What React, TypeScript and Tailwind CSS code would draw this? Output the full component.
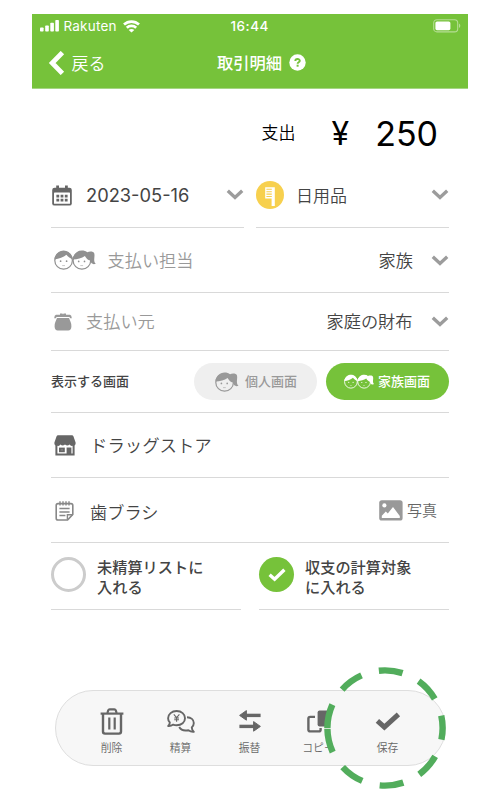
import React from 'react';
import { clsx } from 'clsx';

const jp = "font-['Noto_Sans_CJK_JP',sans-serif]";
const latin = "font-[Inter,'Noto_Sans_CJK_JP',sans-serif]";

const Chevron = () => (
  <svg width="18" height="11" viewBox="0 0 18 11" className="shrink-0">
    <path d="M1.8 1.8 L9 8.4 L16.2 1.8" fill="none" stroke="#9c9c9c" strokeWidth="3.4" />
  </svg>
);

interface FaceProps {
  x?: number;
}

const Boy = ({ x = 0 }: FaceProps) => (
  <g transform={`translate(${x} 0)`}>
    <circle cx="9.6" cy="10.4" r="8.8" fill="none" stroke="currentColor" strokeWidth="1.2" />
    <path d="M.4 9.4 C1 4.2 4.8 .6 9.6 .6 C14.4 .6 18.2 4.2 18.8 9.4 C16.4 8.6 14 7 12.4 4.8 C9.4 7.4 5.2 8.8 .4 9.4Z" fill="currentColor" />
    <circle cx="6.6" cy="11.2" r=".85" fill="currentColor" />
    <circle cx="12.6" cy="11.2" r=".85" fill="currentColor" />
    <path d="M8.2 15.6 H11" fill="none" stroke="currentColor" strokeWidth=".5" />
  </g>
);

const Girl = ({ x = 0 }: FaceProps) => (
  <g transform={`translate(${x} 0)`}>
    <circle cx="9.6" cy="10.4" r="8.8" fill="none" stroke="currentColor" strokeWidth="1.2" />
    <path d="M.4 9.6 C1 4.2 4.8 .6 9.6 .6 C11.8 .6 13.6 1.2 15 2.2 C17.2 1.2 21.4 1.2 22 3.6 C22.6 6 21.6 8.8 22 11 C22.2 12.4 22.8 13.2 23.6 13.6 C21.4 14.8 18.8 14.2 17.8 10.6 C15.6 9.8 13.8 8.4 12.6 6 C9.4 8.2 5.2 9.2 .4 9.6Z" fill="currentColor" />
    <circle cx="6.4" cy="11.4" r=".85" fill="currentColor" />
    <circle cx="12.2" cy="11.4" r=".85" fill="currentColor" />
    <path d="M8 15.6 H10.8" fill="none" stroke="currentColor" strokeWidth=".5" />
  </g>
);

const StatusBar = () => (
  <div className={clsx('flex h-[24px] items-center pl-[8px] pr-[7px] text-white', latin)}>
    <svg width="19" height="12" viewBox="0 0 19 12" className="shrink-0" fill="white">
      <rect x="0" y="7.4" width="3.6" height="4.2" rx=".8" />
      <rect x="5.2" y="5.4" width="3.6" height="6.2" rx=".8" />
      <rect x="10.3" y="2.8" width="3.6" height="8.8" rx=".8" />
      <rect x="15.3" y="0" width="3.6" height="11.6" rx=".8" />
    </svg>
    <span className="ml-[4.5px] mt-[2px] w-[53px] whitespace-nowrap text-[13.5px] leading-none tracking-[0.2px]">Rakuten</span>
    <svg width="17" height="13" viewBox="0 0 17 13" className="ml-[6px] shrink-0" fill="none" stroke="white" strokeWidth="2.7">
      <path d="M1 4.6 C5.2 .6 11.8 .6 16 4.6" />
      <path d="M3.8 7.8 C6.4 5.3 10.6 5.3 13.2 7.8" />
      <path d="M8.5 12.6 L5.7 10 C7.2 8.6 9.8 8.6 11.3 10Z" fill="white" stroke="none" />
    </svg>
    <span className="ml-[91px] mt-[2px] text-[13.5px] font-medium leading-none tracking-[0.5px]">16:44</span>
    <svg width="28" height="14" viewBox="0 0 28 14" className="ml-auto">
      <rect x=".7" y=".7" width="24" height="12.2" rx="3.2" fill="none" stroke="#b5dd94" strokeWidth="1.1" />
      <rect x="2.4" y="2.4" width="15" height="8.8" rx="1.6" fill="white" />
      <path d="M26 4.6 C27.8 5.4 27.8 8.2 26 9Z" fill="#b5dd94" />
    </svg>
  </div>
);

const Header = () => (
  <header className={clsx('h-[75px] border-b border-[#a5d682] bg-[#76c23a]', jp)}>
    <StatusBar />
    <div className="grid h-[50px] grid-cols-[185px_1fr] items-center text-white">
      <button className="flex items-center pl-[16px]">
        <svg width="17" height="24" viewBox="0 0 17 24">
          <path d="M14.4 1.6 L4.2 12 L14.4 22.4" fill="none" stroke="white" strokeWidth="4.8" />
        </svg>
        <span className="mb-[2px] ml-[6.5px] text-[17px] font-[350] leading-none">戻る</span>
      </button>
      <div className="flex items-center">
        <h1 className="mb-px text-[16.3px] font-medium leading-none">取引明細</h1>
        <svg width="17" height="17" viewBox="0 0 17 17" className="ml-[7px]">
          <circle cx="8.5" cy="8.5" r="8.2" fill="white" />
          <path d="M6.3 7 C6.3 4.4 10.8 4.5 10.8 6.8 C10.8 8.4 8.6 8.2 8.6 9.8" fill="none" stroke="#76c23a" strokeWidth="1.9" />
          <rect x="7.6" y="10.7" width="2" height="2" fill="#76c23a" />
        </svg>
      </div>
    </div>
  </header>
);

const CalendarIcon = () => (
  <svg width="20" height="21" viewBox="0 0 20 21" className="shrink-0">
    <path d="M2.6 2.8 H17.4 Q19.8 2.8 19.8 5 V18.4 Q19.8 20.6 17.4 20.6 H2.6 Q.2 20.6 .2 18.4 V5 Q.2 2.8 2.6 2.8Z" fill="#666" />
    <rect x="2" y="7.6" width="16" height="11.2" rx=".6" fill="white" />
    <path d="M5.6 .4 V4.4 M14.4 .4 V4.4" stroke="#666" strokeWidth="2.8" />
    <path d="M4.4 11.2 H15.6 M4.4 15.2 H15.6" stroke="#666" strokeWidth="2.7" strokeDasharray="2.8 1.4" />
  </svg>
);

const BrushIcon = () => (
  <svg width="28" height="28" viewBox="0 0 28 28" className="shrink-0">
    <circle cx="14" cy="14" r="14" fill="#f7d04e" />
    <path d="M9.2 6.2 H18.8 V25 H15.6 V17.6 H9.2Z" fill="white" />
    <path d="M10.4 8.3 H15.8 M10.4 10.7 H15.8 M10.4 13.1 H15.8 M10.4 15.5 H15.8" stroke="#f7d04e" strokeWidth="1.1" />
  </svg>
);

const PurseIcon = () => (
  <svg width="18" height="18" viewBox="0 0 18 18" className="shrink-0" fill="#999">
    <path d="M6 .6 H8.4 L9 1.4 L9.6 .6 H12 V1.8 H16 Q17.6 2 17.8 5.2 H16.2 Q16 4.2 15.2 4 H2.8 Q2 4.2 1.8 5.2 H.2 Q.4 2 2 1.8 H6Z" />
    <path d="M3 5 H15 C16 7.8 17.6 9.8 17.4 13.4 C17.3 16 16.2 17.4 14.2 17.4 H3.8 C1.8 17.4 .7 16 .6 13.4 C.4 9.8 2 7.8 3 5Z" />
  </svg>
);

const StoreIcon = () => (
  <svg width="22" height="21" viewBox="0 0 22 21" className="shrink-0">
    <path d="M4 .2 H18 Q19 .2 19.4 1.2 L21.6 7.6 V8.8 Q21.4 10 20.6 10.4 V20.6 H1.4 V10.4 Q.6 10 .4 8.8 V7.6 L2.6 1.2 Q3 .2 4 .2Z" fill="#666" />
    <path d="M3.4 10.8 Q5.4 11.4 6.4 9.6 Q8.6 11.6 11 9.6 Q13.4 11.6 15.6 9.6 Q16.8 11.4 18.6 10.8 V18.6 H17.4 V12.6 H12.6 V18.6 H3.4Z" fill="white" />
    <path d="M5 12.6 H10.8 V17.2 H5Z" fill="#666" />
    <path d="M6.8 14.3 H9 V15.5 H6.8Z" fill="#888" />
    <path d="M13.6 13.6 H16.6 V18.8 H13.6Z" fill="#666" />
  </svg>
);

const MemoIcon = () => (
  <svg width="19" height="20" viewBox="0 0 19 20" className="shrink-0" fill="none" stroke="#888">
    <path d="M3 2.6 H16 Q17.8 2.6 17.8 4.4 V13.4 L12.6 19 H3 Q1.2 19 1.2 17.2 V4.4 Q1.2 2.6 3 2.6Z" strokeWidth="1.6" />
    <path d="M12.4 18.6 V13.8 H17.6" strokeWidth="1.4" />
    <path d="M5 .2 V4.6 M8 .2 V4.6 M11 .2 V4.6 M14 .2 V4.6" strokeWidth="1.4" />
    <path d="M4.4 7.6 H14.6 M4.4 11 H14.6 M4.4 14.4 H10.4" strokeWidth="1.5" />
  </svg>
);

const PhotoIcon = () => (
  <svg width="24" height="21" viewBox="0 0 24 21" className="shrink-0">
    <rect x=".2" y=".2" width="23.4" height="20.4" rx="2.6" fill="#999" />
    <circle cx="5.4" cy="5.4" r="2.1" fill="white" />
    <path d="M2.8 18 V15.8 L6.8 11.6 L8.8 13.4 L14 7 L20.8 16 V18Z" fill="white" />
  </svg>
);

const TrashIcon = () => (
  <svg width="24" height="27" viewBox="0 0 24 27" fill="none" stroke="#666">
    <path d="M.6 5.6 H23.4" strokeWidth="2.2" />
    <path d="M7.4 5 L8.2 2.4 Q8.6 1.4 9.6 1.4 H14.4 Q15.4 1.4 15.8 2.4 L16.6 5" strokeWidth="2.2" />
    <path d="M3 5.6 V23.6 Q3 25.6 5 25.6 H19 Q21 25.6 21 23.6 V5.6" strokeWidth="2.4" />
    <path d="M9.3 9.4 V21.6 M14.7 9.4 V21.6" strokeWidth="2.2" />
  </svg>
);

const SettleIcon = () => (
  <svg width="28" height="23" viewBox="0 0 28 23" fill="none" stroke="#666" strokeWidth="1.9" strokeLinejoin="round">
    <path d="M9.6 1 C14.6 1 18 4.2 18 8.2 C18 12.2 14.6 15.2 9.6 15.2 C8.2 15.2 7.2 15 6.2 14.6 C4.8 15.6 3 16.2 1.2 16 C2.2 15 2.8 13.8 2.8 12.4 C1.6 11.2 1.1 9.8 1.1 8.2 C1.1 4.2 4.8 1 9.6 1Z" />
    <path d="M20 7.2 C24 7.4 26.8 9.8 26.8 13 C26.8 14.8 26 16.2 24.8 17.4 C24.8 19 25.4 20.4 26.8 21.8 C24.8 22 23 21.4 21.4 20.2 C17.4 21 13.6 19.6 12.2 17" />
    <path d="M6.8 4.4 L9.6 7.6 L12.4 4.4 M9.6 7.6 V11.8 M7.2 8 H12 M7.2 9.8 H12" strokeWidth="1.1" />
  </svg>
);

const TransferIcon = () => (
  <svg width="22" height="22" viewBox="0 0 22 22" fill="#666" stroke="#666">
    <path d="M6 5.4 H21.6" strokeWidth="3.4" />
    <path d="M.6 5.4 L7.4 .6 V10.2Z" strokeWidth="1" strokeLinejoin="round" />
    <path d="M.4 16.4 H16" strokeWidth="3.4" />
    <path d="M21.4 16.4 L14.6 11.6 V21.2Z" strokeWidth="1" strokeLinejoin="round" />
  </svg>
);

const CopyIcon = () => (
  <svg width="23" height="23" viewBox="0 0 23 23">
    <path d="M8 6.9 H3.2 Q1.4 6.9 1.4 8.6 V19.8 Q1.4 21.4 3.2 21.4 H12 Q13.6 21.4 13.6 19.8 V18" fill="none" stroke="#666" strokeWidth="2.4" />
    <rect x="10.6" y=".6" width="12.2" height="16" rx="2" fill="#666" />
  </svg>
);

const SaveIcon = () => (
  <svg width="26" height="19" viewBox="0 0 26 19">
    <path d="M2.4 8.8 L9.4 15.2 L23.4 2.4" fill="none" stroke="#666" strokeWidth="5" />
  </svg>
);

const actions = [
  { label: '削除', icon: <TrashIcon /> },
  { label: '精算', icon: <SettleIcon /> },
  { label: '振替', icon: <TransferIcon /> },
  { label: 'コピー', icon: <CopyIcon /> },
  { label: '保存', icon: <SaveIcon /> },
];

const App: React.FC = () => {
  return (
    <div className={clsx('h-[806px] w-[498px] bg-white pl-[32px] pt-[14px] leading-none text-[#444]', jp)}>
      <div className="w-[436px]">
        <Header />

        <main className="px-[19px]">
          <div className="flex h-[73px] items-center justify-end pr-[11px] pt-[15px] text-black">
            <span className="mb-[3px] text-[17px] font-[350]">支出</span>
            <span className={clsx('ml-[36px] mt-[2px] text-[32px]', latin)}>¥</span>
            <span className={clsx('ml-[26px] mt-[2px] text-[34px]', latin)}>250</span>
          </div>

          <div className="flex justify-between">
            <div className="flex h-[66px] w-[193px] items-center border-b border-[#d9d9d9] pl-[1px]">
              <span className="mt-[2px]"><CalendarIcon /></span>
              <span className={clsx('ml-[14px] mt-px text-[18.3px]', latin)}>2023-05-16</span>
              <span className="ml-auto"><Chevron /></span>
            </div>
            <div className="flex h-[66px] w-[193px] items-center border-b border-[#d9d9d9]">
              <BrushIcon />
              <span className="mb-px ml-[12px] text-[17px] font-[350]">日用品</span>
              <span className="ml-auto"><Chevron /></span>
            </div>
          </div>

          <div className="flex h-[65px] items-center border-b border-[#d9d9d9] pl-[2.5px]">
            <svg width="43" height="20" viewBox="0 0 43 20" className="text-[#909090]">
              <Boy />
              <Girl x={18.3} />
            </svg>
            <span className="ml-[11px] text-[17.2px] font-[350] text-[#999]">支払い担当</span>
            <span className="ml-auto mr-[18px] text-[17.2px] font-[350]">家族</span>
            <Chevron />
          </div>

          <div className="flex h-[58px] items-center border-b border-[#d9d9d9] pl-[3px]">
            <PurseIcon />
            <span className="mb-px ml-[14px] text-[17.2px] font-[350] text-[#999]">支払い元</span>
            <span className="mb-px ml-auto mr-[18.5px] text-[17.2px] font-[350]">家庭の財布</span>
            <Chevron />
          </div>

          <div className="flex h-[62px] items-center border-b border-[#d9d9d9]">
            <span className="mb-[2px] text-[13px] font-medium">表示する画面</span>
            <button className="ml-auto flex h-[37px] w-[123px] items-center rounded-full bg-[#efefef] pl-[21px] text-[#999]">
              <svg width="24" height="20" viewBox="0 0 24 20">
                <Girl />
              </svg>
              <span className="mb-[2px] ml-[6px] text-[13px] font-medium">個人画面</span>
            </button>
            <button className="ml-[9px] flex h-[37px] w-[123px] items-center rounded-full bg-[#76c23a] pl-[18px] text-white">
              <svg width="31" height="15" viewBox="0 0 43 20">
                <Boy />
                <Girl x={18.3} />
              </svg>
              <span className="mb-[2px] ml-[3px] text-[13px] font-medium">家族画面</span>
            </button>
          </div>

          <div className="flex h-[65px] items-center border-b border-[#d9d9d9] pl-[3px]">
            <StoreIcon />
            <span className="mb-px ml-[14px] text-[17.4px] font-[350]">ドラッグストア</span>
          </div>

          <div className="flex h-[65px] items-center border-b border-[#d9d9d9] pl-[4px]">
            <span className="mt-[2px]"><MemoIcon /></span>
            <span className="ml-[16px] pt-[3px] text-[17.2px] font-[350]">歯ブラシ</span>
            <div className="ml-auto mr-[12px] flex items-center">
              <PhotoIcon />
              <span className="mb-[2px] ml-[4px] text-[15px] font-[350] text-[#666]">写真</span>
            </div>
          </div>

          <div className="flex justify-between text-[15.2px] font-medium leading-[20px]">
            <div className="flex h-[67px] w-[190px] items-start border-b border-[#d9d9d9] pt-[13px]">
              <div className="mt-px size-[35px] shrink-0 rounded-full border-[3px] border-[#ccc]" />
              <p className="ml-[11px]">未精算リストに<br />入れる</p>
            </div>
            <div className="flex h-[67px] w-[190px] items-start border-b border-[#d9d9d9] pt-[13px]">
              <div className="mt-px flex size-[35px] shrink-0 items-center justify-center rounded-full bg-[#76c23a]">
                <svg width="18" height="14" viewBox="0 0 18 14">
                  <path d="M1.6 6.8 L6.6 11.2 L16.4 1.8" fill="none" stroke="white" strokeWidth="3.4" />
                </svg>
              </div>
              <p className="ml-[11px]">収支の計算対象<br />に入れる</p>
            </div>
          </div>
        </main>

        <nav className="relative ml-[23px] mt-[80px] flex h-[76px] w-[391px] rounded-full border-[1.5px] border-[#dedede] bg-[#f7f7f7] pl-[21px]">
          {actions.map((action) => (
            <button key={action.label} className="flex w-[69px] shrink-0 flex-col items-center pt-[15px]">
              <span className="flex h-[30px] items-center">{action.icon}</span>
              <span className="mt-[6px] whitespace-nowrap text-[10.8px] font-[350] text-[#666]">{action.label}</span>
            </button>
          ))}
          {/* dashed ring around the save button */}
          <svg className="absolute left-[267px] top-[-25px]" width="124" height="124" viewBox="0 0 124 124">
            <path
              d="M4.4 62 A57.6 57.6 0 0 1 119.6 62 A57.6 57.6 0 0 1 4.4 62"
              pathLength="360"
              fill="none"
              stroke="#52ad5c"
              strokeWidth="6.4"
              strokeDasharray="24 17.9"
            />
          </svg>
        </nav>
      </div>
    </div>
  );
};

export default App;
